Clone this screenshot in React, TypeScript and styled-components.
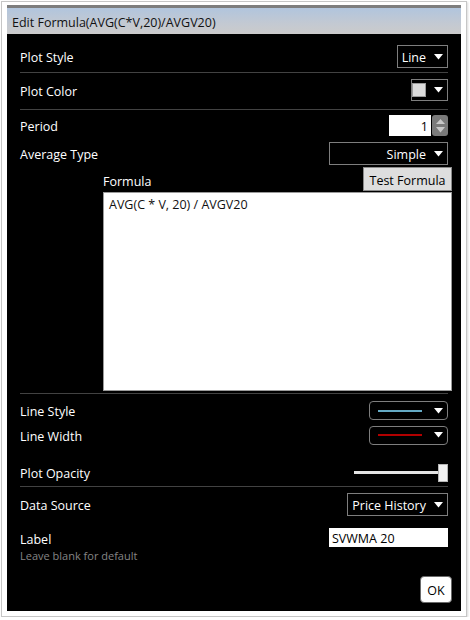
import React from 'react'
import styled, { createGlobalStyle } from 'styled-components'

const GlobalStyle = createGlobalStyle`
  html, body {
    margin: 0;
    padding: 0;
    background: #ffffff;
  }
  body {
    font-family: "Open Sans", "Noto Sans", "Liberation Sans", sans-serif;
    font-size: 12px;
  }
`;

const Frame = styled.div`
  margin: 1px 0 0 1px;
  width: 454px;
  padding: 3px 5px 5px 5px;
  border: 1px solid #c6c6c6;
  background: #ffffff;
  box-shadow: 1px 1px 2px rgba(0, 0, 0, 0.15);
`;

const Window = styled.div`
  border-top: 3px solid #7d7d7d;
  background: #000000;
  display: flex;
  flex-direction: column;
`;

const TitleBar = styled.div`
  box-sizing: border-box;
  height: 26px;
  display: flex;
  align-items: center;
  padding: 2px 0 0 5px;
  background: linear-gradient(to bottom, #b1c5dd 0%, #c3c9d2 60%, #cbcbcb 100%);
  color: #111;
  font-size: 12.5px;
`;

const Body = styled.div`
  display: flex;
  flex-direction: column;
  padding: 7px 0 8px 13px;
`;

const Row = styled.div<{ $h: number; $mt?: number }>`
  height: ${(p) => p.$h}px;
  margin-top: ${(p) => p.$mt ?? 0}px;
  margin-right: 13px;
  display: flex;
  align-items: center;
  justify-content: space-between;
`;

const Label = styled.span`
  color: #ffffff;
  font-size: 12.5px;
  line-height: 16px;
  padding-top: 3px;
`;

const Separator = styled.div<{ $mt?: number }>`
  height: 1px;
  margin-top: ${(p) => p.$mt ?? 0}px;
  margin-right: 13px;
  background: #424242;
`;

const SelectBox = styled.div<{ $w: number; $h?: number; $round?: boolean }>`
  box-sizing: border-box;
  width: ${(p) => p.$w}px;
  height: ${(p) => p.$h ?? 23}px;
  border: 1px solid #7e7e7e;
  border-radius: ${(p) => (p.$round ? 4 : 0)}px;
  display: flex;
  align-items: center;
  justify-content: flex-end;
  gap: 8px;
  padding: 0 4px 0 4px;
  color: #ffffff;
  font-size: 12.5px;
`;

const SelectText = styled.span`
  padding-top: 2px;
`;

const Swatch = styled.div`
  flex-shrink: 0;
  width: 14px;
  height: 14px;
  box-sizing: border-box;
  background: #dcdcdc;
  border: 1px solid #9a9a9a;
  margin-right: auto;
`;

const LineSample = styled.div<{ $color: string }>`
  width: 44px;
  height: 2px;
  background: ${(p) => p.$color};
  margin-left: 4px;
  margin-right: auto;
`;

const SpinWrap = styled.div`
  display: flex;
  align-items: stretch;
  height: 21px;
  margin-top: 1px;
`;

const SpinInput = styled.div`
  box-sizing: border-box;
  width: 42px;
  background: #ffffff;
  color: #000;
  font-size: 12.5px;
  text-align: right;
  padding: 2px 3px 0 0;
  line-height: 19px;
`;

const SpinButtons = styled.div`
  width: 16px;
  margin-left: 1px;
  background: #7a7a7a;
  border-radius: 3px;
  display: flex;
  flex-direction: column;
  align-items: center;
  justify-content: space-around;
  padding: 2px 0;
  box-sizing: border-box;
`;

const FormulaHeader = styled.div`
  height: 25px;
  margin-left: 83px;
  margin-right: 9px;
  display: flex;
  align-items: flex-end;
  justify-content: space-between;
`;

const FormulaLabel = styled(Label)`
  margin-bottom: 2px;
`;

const TestButton = styled.div`
  box-sizing: border-box;
  width: 89px;
  height: 24px;
  background: #dedede;
  border: 1px solid #8a8a8a;
  color: #000;
  font-size: 12.5px;
  display: flex;
  align-items: center;
  justify-content: center;
  padding-top: 2px;
  margin-bottom: 1px;
`;

const FormulaArea = styled.div`
  box-sizing: border-box;
  height: 199px;
  margin-left: 83px;
  margin-right: 9px;
  background: #ffffff;
  border: 1px solid #9a9a9a;
  color: #111;
  font-size: 12.5px;
  padding: 4px 5px;
  line-height: 16px;
`;

const Slider = styled.div`
  display: flex;
  align-items: center;
  width: 94px;
`;

const Track = styled.div`
  flex: 1;
  height: 3px;
  background: #e4e4e4;
`;

const Thumb = styled.div`
  box-sizing: border-box;
  width: 10px;
  height: 18px;
  background: #f1f1f1;
  border: 1px solid #b5b5b5;
  margin-left: -2px;
`;

const LabelRow = styled.div`
  height: 38px;
  margin-right: 13px;
  display: flex;
  justify-content: space-between;
  align-items: flex-start;
  padding-top: 6px;
  box-sizing: border-box;
`;

const LabelCol = styled.div`
  display: flex;
  flex-direction: column;
  margin-top: 1px;
`;

const Hint = styled.span`
  color: #858585;
  font-size: 11px;
  line-height: 14px;
  padding-top: 1px;
`;

const TextInput = styled.div`
  box-sizing: border-box;
  width: 119px;
  height: 19px;
  background: #ffffff;
  color: #000;
  font-size: 12.5px;
  line-height: 19px;
  padding: 1px 0 0 3px;
`;

const Footer = styled.div`
  display: flex;
  justify-content: flex-end;
  margin-top: 16px;
  margin-right: 9px;
`;

const OkButton = styled.div`
  box-sizing: border-box;
  width: 32px;
  height: 27px;
  background: #ffffff;
  border: 1px solid #6a6a6a;
  border-radius: 4px;
  color: #000;
  font-size: 12.5px;
  display: flex;
  align-items: center;
  justify-content: center;
  padding-top: 2px;
`;

const Arrow = ({ color = '#ffffff' }: { color?: string }) => (
  <svg width="9" height="6" viewBox="0 0 9 6" style={{ flexShrink: 0 }}>
    <polygon points="0,0 9,0 4.5,5.5" fill={color} />
  </svg>
);

const UpArrow = () => (
  <svg width="9" height="5" viewBox="0 0 9 5">
    <polygon points="0,5 9,5 4.5,0" fill="#c8c8c8" />
  </svg>
);

const App = () => {
  return (
    <>
      <GlobalStyle />
      <Frame>
        <Window>
          <TitleBar>Edit Formula(AVG(C*V,20)/AVGV20)</TitleBar>
          <Body>
            <Row $h={31}>
              <Label>Plot Style</Label>
              <SelectBox $w={51}>
                <SelectText>Line</SelectText> <Arrow />
              </SelectBox>
            </Row>
            <Separator />
            <Row $h={34}>
              <Label>Plot Color</Label>
              <SelectBox $w={37} $h={22}>
                <Swatch />
                <Arrow />
              </SelectBox>
            </Row>
            <Separator $mt={2} />
            <Row $h={30}>
              <Label>Period</Label>
              <SpinWrap>
                <SpinInput>1</SpinInput>
                <SpinButtons>
                  <UpArrow />
                  <Arrow color="#c8c8c8" />
                </SpinButtons>
              </SpinWrap>
            </Row>
            <Row $h={27}>
              <Label>Average Type</Label>
              <SelectBox $w={119}>
                <SelectText>Simple</SelectText> <Arrow />
              </SelectBox>
            </Row>
            <FormulaHeader>
              <FormulaLabel>Formula</FormulaLabel>
              <TestButton>Test Formula</TestButton>
            </FormulaHeader>
            <FormulaArea>AVG(C * V, 20) / AVGV20</FormulaArea>
            <Separator $mt={2} />
            <Row $h={25} $mt={4}>
              <Label>Line Style</Label>
              <SelectBox $w={79} $h={19} $round>
                <LineSample $color="#64a9c4" />
                <Arrow />
              </SelectBox>
            </Row>
            <Row $h={24}>
              <Label>Line Width</Label>
              <SelectBox $w={79} $h={19} $round>
                <LineSample $color="#b20000" />
                <Arrow />
              </SelectBox>
            </Row>
            <Row $h={27} $mt={12}>
              <Label>Plot Opacity</Label>
              <Slider>
                <Track />
                <Thumb />
              </Slider>
            </Row>
            <Separator />
            <Row $h={35}>
              <Label>Data Source</Label>
              <SelectBox $w={101}>
                <SelectText>Price History</SelectText> <Arrow />
              </SelectBox>
            </Row>
            <LabelRow>
              <LabelCol>
                <Label>Label</Label>
                <Hint>Leave blank for default</Hint>
              </LabelCol>
              <TextInput>SVWMA 20</TextInput>
            </LabelRow>
            <Footer>
              <OkButton>OK</OkButton>
            </Footer>
          </Body>
        </Window>
      </Frame>
    </>
  )
}

export default App;
